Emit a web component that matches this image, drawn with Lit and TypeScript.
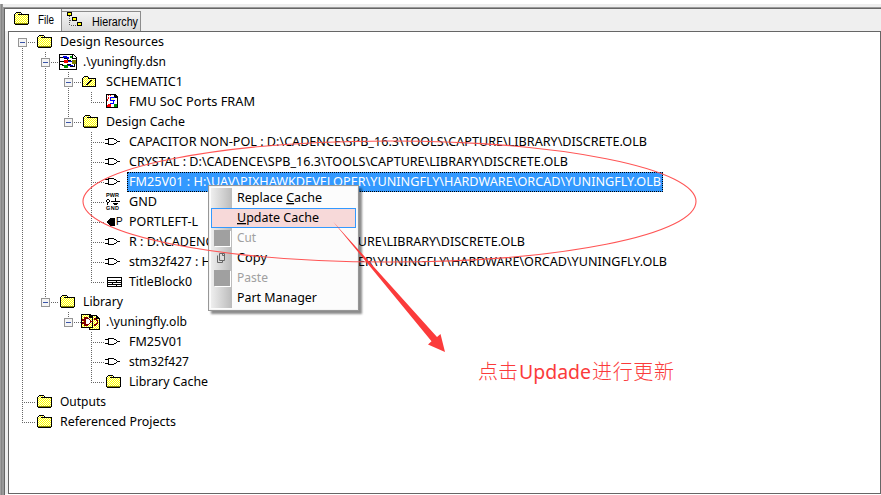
import { LitElement, html, svg, css } from "lit";
import { customElement } from "lit/decorators.js";

type Row = { g: string; exp?: boolean; icon: string; text: string; w: number; sel?: boolean };

/* Guide codes: v = full line, t = line with branch, l = last branch, d = first root, s = space */
const rows: Row[] = [
  { g: "d", exp: true, icon: "folder", text: "Design Resources", w: 104 },
  { g: "vt", exp: true, icon: "design", text: ".\\yuningfly.dsn", w: 83 },
  { g: "vvt", exp: true, icon: "schematic", text: "SCHEMATIC1", w: 77 },
  { g: "vvvl", icon: "page", text: "FMU SoC Ports FRAM", w: 126 },
  { g: "vvl", exp: true, icon: "folder", text: "Design Cache", w: 79 },
  { g: "vvst", icon: "gate", text: "CAPACITOR NON-POL : D:\\CADENCE\\SPB_16.3\\TOOLS\\CAPTURE\\LIBRARY\\DISCRETE.OLB", w: 518 },
  { g: "vvst", icon: "gate", text: "CRYSTAL : D:\\CADENCE\\SPB_16.3\\TOOLS\\CAPTURE\\LIBRARY\\DISCRETE.OLB", w: 439 },
  { g: "vvst", icon: "gate", text: "FM25V01 : H:\\UAV\\PIXHAWKDEVELOPER\\YUNINGFLY\\HARDWARE\\ORCAD\\YUNINGFLY.OLB", w: 532, sel: true },
  { g: "vvst", icon: "power", text: "GND", w: 28 },
  { g: "vvst", icon: "port", text: "PORTLEFT-L", w: 69 },
  { g: "vvst", icon: "gate", text: "R : D:\\CADENCE\\SPB_16.3\\TOOLS\\CAPTURE\\LIBRARY\\DISCRETE.OLB", w: 396 },
  { g: "vvst", icon: "gate", text: "stm32f427 : H:\\UAV\\PIXHAWKDEVELOPER\\YUNINGFLY\\HARDWARE\\ORCAD\\YUNINGFLY.OLB", w: 538 },
  { g: "vvsl", icon: "title", text: "TitleBlock0", w: 63 },
  { g: "vl", exp: true, icon: "folder", text: "Library", w: 40 },
  { g: "vsl", exp: true, icon: "library", text: ".\\yuningfly.olb", w: 81 },
  { g: "vsst", icon: "gate", text: "FM25V01", w: 54 },
  { g: "vsst", icon: "gate", text: "stm32f427", w: 60 },
  { g: "vssl", icon: "folder", text: "Library Cache", w: 79 },
  { g: "t", icon: "folder", text: "Outputs", w: 46 },
  { g: "l", icon: "folder", text: "Referenced Projects", w: 116 },
];

const label = (text: string, w: number, y = 14) => svg`
  <svg class="label" width=${w + 2} height="20">
    <text x="0" y=${y} textLength=${w} lengthAdjust="spacingAndGlyphs">${text}</text>
  </svg>`;

const dither = svg`<defs><pattern id="dither" width="2" height="2" patternUnits="userSpaceOnUse">
  <rect width="2" height="2" fill="#ffff00"/><rect width="1" height="1" fill="#ffffe0"/><rect x="1" y="1" width="1" height="1" fill="#ffffe0"/>
</pattern></defs>`;

const folder = svg`
  <path d="M1 5h13v9H1z M2 4h4v1H2z" fill="url(#dither)"/>
  <path d="M2 3h5v1H2z M1 4h1v1H1z M7 4h1v1H7z M0 5h1v10H0z M8 5h6v1H8z M1 15h13v1H1z M14 5h1v10H14z M4 5h4v1H4z" fill="#000"/>
  <path d="M1 14h13v1H1z" fill="#8a8a00"/>`;

const icons: Record<string, unknown> = {
  folder,
  schematic: svg`
    <path d="M0 6h12v8H0z M1 5h4v1H1z" fill="url(#dither)"/>
    <path d="M1 4h4v1H1z M0 5h1v1H0z M5 5h1v1H5z M-1 6h1v9H-1z M5 6h7v1H5z M0 14h13v1H0z M12 6h1v9H12z M4 11h2v1H4z M5 10h2v1H5z M6 9h2v1H6z M7 8h2v1H7z M3 12h2v1H3z" fill="#000"/>`,
  design: svg`
    <path d="M-1 2h14l4 4v12H-1z" fill="#000"/><path d="M0 3h12v4h4v10H0z" fill="#fff"/>
    <path d="M13 3v3h3z" fill="#fff"/>
    <path d="M0 5h4v1h3v2h3v1h3 M0 9h4 M0 12h2v1h4 M7 12h3v2h4v-3" fill="none" stroke="#000" stroke-width="1"/>
    <path d="M3 4h4v1h2v2H7V6H3z M7 9h5v1H7z M8 13h5v1H8z" fill="#0000e0"/>
    <path d="M4 8h4v3H4z" fill="#f00000"/><path d="M12 8h4v4H12z" fill="#808000"/>
    <path d="M4 13h4v3H4z" fill="#009000"/><path d="M10 4h2v2H10z" fill="#00a000"/>`,
  page: svg`
    <path d="M0 2h9l3 3v11H0z" fill="#000"/><path d="M1 3h7v3h3v9H1z" fill="#fff"/>
    <path d="M2 3h1v1H2z M4 3h1v1H4z M2 5h1v2H2z M1 7h1v2H1z" fill="#ff0000"/>
    <path d="M4 5h5v1H4z M4 6h1v2H4z M4 8h5v1H4z M7 9h1v3H7z M4 11h4v1H4z" fill="#0000ff"/>
    <path d="M5 6h3v2H5z" fill="#ffff90"/><path d="M2 12h3v3H1v-2z" fill="#ff0000"/><path d="M8 12h3v3H8z" fill="#009000"/>`,
  gate: svg`
    <path d="M2 6h6v1H2z M2 12h6v1H2z M2 6h1v7H2z M-1 7h3v1H-1z M-1 11h3v1H-1z M8 7h2v1H8z M8 11h2v1H8z M10 8h1v1h-1z M10 10h1v1h-1z M11 9h3v1h-3z" fill="#000"/>`,
  power: svg`
    <text class="tiny" x="0" y="5.3" textLength="13">PWR</text>
    <path d="M1 7h2v1H1z M0 8h1v2H0z M3 8h1v2H3z M1 10h2v1H1z M1 11h1v2H1z M9 6h1v3H9z M5 9h9v1H5z M7 11h5v1H7z M8 12h3v1H8z" fill="#000"/>
    <text class="tiny" x="0" y="17.6" textLength="13">GND</text>`,
  port: svg`
    <path d="M4 6h5v8H4l-3-3V9z" fill="#000"/><text class="port" x="10" y="13">P</text>`,
  title: svg`
    <path d="M1 5h15v10H1z" fill="#000"/><path d="M2 6h13v2H2z M2 9h8v1H2z M11 9h4v1h-4z M2 11h4v1H2z M7 11h8v1H7z M2 13h8v1H2z M11 13h4v1h-4z" fill="#fff"/>`,
  library: svg`
    <path d="M6 3h7l4 4v11H6z" fill="#000"/><path d="M7 4h6v3h3v10H7z" fill="url(#dither)"/>
    <path d="M-2 2h9l3 3v11H-2z" fill="#000"/><path d="M-1 3h7v3h3v9H-1z" fill="url(#dither)"/>
    <path d="M2 6h3l3 3v1l-3 3H2z" fill="#fff" stroke="#800000" stroke-width="1.3"/>
    <path d="M-1 8h3 M-1 11h3 M8 9.5h2 M11 7h2l2 3-2 3h-2" fill="none" stroke="#800000" stroke-width="1.3"/>`,
};

const icon = (name: string) => html`
  <svg class="icon" width="23" height="20" viewBox="0 0 23 20" shape-rendering="crispEdges">${dither}${icons[name]}</svg>`;

@customElement("tree-row")
class TreeRow extends LitElement {
  static properties = { row: { attribute: false } };
  declare row: Row;
  static styles = css`
    :host { display: flex; height: 20px; }
    .g { flex: none; width: 23px; height: 20px; position: relative; }
    .end { width: 15px; }
    .g::before { content: ""; position: absolute; left: 0; top: 0; width: 1px; height: 20px;
      background: repeating-linear-gradient(#666 0 1px, transparent 1px 2px); }
    .l::before { height: 11px; }
    .d::before { top: 10px; height: 10px; }
    .s::before { display: none; }
    .t::after, .l::after, .d::after { content: ""; position: absolute; left: 0; top: 10px; width: 13px; height: 1px;
      background: repeating-linear-gradient(90deg, #666 0 1px, transparent 1px 2px); }
    .box { position: absolute; z-index: 1; left: -4px; top: 6px; }
    .icon { flex: none; overflow: visible; }
    .label { flex: none; overflow: visible; font: 13px "Noto Sans", "Open Sans", sans-serif; fill: #000; }
    .sel { display: flex; height: 20px; margin-left: -2px; padding-left: 2px; background: #39f;
      outline: 1px dotted #000; outline-offset: -1px; }
    .sel .label { fill: #fff; }
    .tiny { font: bold 5.5px "Liberation Sans", sans-serif; }
    .port { font: 10px "Liberation Sans", sans-serif; }
  `;
  render() {
    const r = this.row;
    const last = r.g.length - 1;
    return html`
      ${[...r.g].map((c, i) => html`<div class="g ${c} ${i === last ? "end" : ""}">${i === last && r.exp ? html`
        <svg class="box" width="9" height="9" shape-rendering="crispEdges">
          <rect x=".5" y=".5" width="8" height="8" fill="#f4f4f4" stroke="#959595"/><path d="M2 4.5h5" stroke="#3a55a8"/>
        </svg>` : ""}</div>`)}
      ${icon(r.icon)}
      <div class=${r.sel ? "sel" : ""}>${label(r.text, r.w)}</div>`;
  }
}

type Item = { pre: string; key: string; post: string; w: number; off?: boolean; hot?: boolean; copy?: boolean };
const items: Item[] = [
  { pre: "Replace ", key: "C", post: "ache", w: 85 },
  { pre: "", key: "U", post: "pdate Cache", w: 82, hot: true },
  { pre: "Cut", key: "", post: "", w: 19, off: true },
  { pre: "Copy", key: "", post: "", w: 30, copy: true },
  { pre: "Paste", key: "", post: "", w: 31, off: true },
  { pre: "Part Manager", key: "", post: "", w: 80 },
];

@customElement("app-root")
class AppRoot extends LitElement {
  static styles = css`
    :host { display: block; width: 881px; height: 495px; overflow: hidden; position: relative; background: #fff; box-sizing: border-box; padding-top: 4px; }
    .window { box-sizing: border-box; height: 491px; display: flex; border-left: 1px solid #a0a0a0; background: linear-gradient(90deg, #868686 0 1px, #999 1px 2px, #777 2px 3px, #eee 3px); }
    .inner { flex: 1; margin-left: 2px; border-top: 3px solid #eee; }
    .frame { height: 488px; box-sizing: border-box; border-top: 1px solid #999; border-left: 1px solid #999; }
    .body { height: 487px; box-sizing: border-box; border-top: 1px solid #666; border-left: 1px solid #666; background: #efefef; padding-left: 3px; display: flex; flex-direction: column; }
    .tabs { height: 22px; display: flex; align-items: flex-end; flex: none; margin-left: -3px; }
    .tab { box-sizing: border-box; display: flex; }
    .file { width: 57px; height: 22px; background: #fff; border-right: 1px solid #888; padding: 0 0 0 9px; }
    .hier { width: 79px; height: 20px; background: linear-gradient(#f3f3f3, #d9d9d9); border: 1px solid #8c8c8c; border-bottom: 0; border-left: 0; padding-left: 5px; }
    .tab .label { font: 12.5px "Liberation Sans", sans-serif; overflow: visible; }
    .tree { box-sizing: border-box; width: 873px; height: 463px; background: #fff; border: 1px solid #666; padding-left: 13px; }
    .under { flex: 1; background: #fff; margin-left: -3px; }
    .menu { position: absolute; left: 208px; top: 185px; width: 151px; height: 126px; box-sizing: border-box; border: 1px solid #979797; background: #fcfcfc; padding: 2px; box-shadow: inset 0 0 0 1px #f4f4f4, 3px 3px 2px rgba(0,0,0,.45); }
    .item { height: 20px; display: flex; box-sizing: border-box; position: relative; }
    .strip { width: 21px; height: 20px; flex: none; background: linear-gradient(90deg, #eee, #bbb); margin-right: 5px; }
    .item .label { font: 13px "Noto Sans", "Open Sans", sans-serif; overflow: visible; }
    .hot { background: #f7d9d9; outline: 1px solid #39f; outline-offset: -1px; }
    .hot .strip { background: none; }
    .off .label { fill: #a0a0a0; }
    .strip { display: flex; }
    .blank { width: 16px; height: 16px; margin: 2px 0 0 3px; background: #a0a0a0; box-shadow: 1px 1px 0 #fff; }
    .key { text-decoration: underline; }
    .notes { position: absolute; left: 0; top: 0; }
    .note { font: 20px "Noto Sans CJK SC", sans-serif; font-weight: 300; fill: #fb3b3b; }
    .latin { font: 20px "Noto Sans", sans-serif; fill: #fb3b3b; }
  `;
  render() {
    return html`
      <div class="window"><div class="inner"><div class="frame"><div class="body">
        <div class="tabs">
          <div class="tab file">
            <svg width="24" height="20" viewBox="0 0 24 20" shape-rendering="crispEdges">${dither}${folder}</svg>
            ${label("File", 16, 15)}
          </div>
          <div class="tab hier">
            <svg width="25" height="19" shape-rendering="crispEdges">
              <path d="M2.5 4v9H11 M2.500 8.500H6" stroke="#555" stroke-dasharray="1 1" fill="none"/>
              <g fill="#ff0" stroke="#000"><rect x=".5" y=".5" width="4" height="3"/><rect x="5.5" y="5.5" width="4" height="3"/><rect x="10.5" y="10.5" width="4" height="3"/></g>
            </svg>
            ${label("Hierarchy", 46)}
          </div>
        </div>
        <div class="tree">${rows.map((r) => html`<tree-row .row=${r}></tree-row>`)}</div>
        <div class="under"></div>
      </div></div></div></div>

      <div class="menu">${items.map((i) => html`
        <div class="item ${i.hot ? "hot" : ""} ${i.off ? "off" : ""}">
          <div class="strip">${i.off ? html`<div class="blank"></div>` : ""}${i.copy ? html`
            <svg width="21" height="20" fill="#ddd" stroke="#666"><path d="M6.5 7.5v7h5v-2 M8.5 5.5h5v7h-5z M11.5 5.5v2h2"/></svg>` : ""}</div>
          <svg class="label" width=${i.w} height="20"><text x="0" y="14" textLength=${i.w} lengthAdjust="spacingAndGlyphs">${i.pre}<tspan class="key">${i.key}</tspan>${i.post}</text></svg>
        </div>`)}
      </div>

      <svg class="notes" width="881" height="495">
        <ellipse cx="389.5" cy="201.5" rx="306.5" ry="60.5" fill="none" stroke="#f55" stroke-width="1.1"/>
        <path d="M333 221.5L437 337l3.500-3L445 352l-17-7.500 3.500-3.200z" fill="#fb3b3b"/>
        <text class="note" x="478" y="379" textLength="40">点击</text>
        <text class="latin" x="519" y="379" textLength="72" lengthAdjust="spacingAndGlyphs">Updade</text>
        <text class="note" x="592" y="379" textLength="82">进行更新</text>
      </svg>`;
  }
}
